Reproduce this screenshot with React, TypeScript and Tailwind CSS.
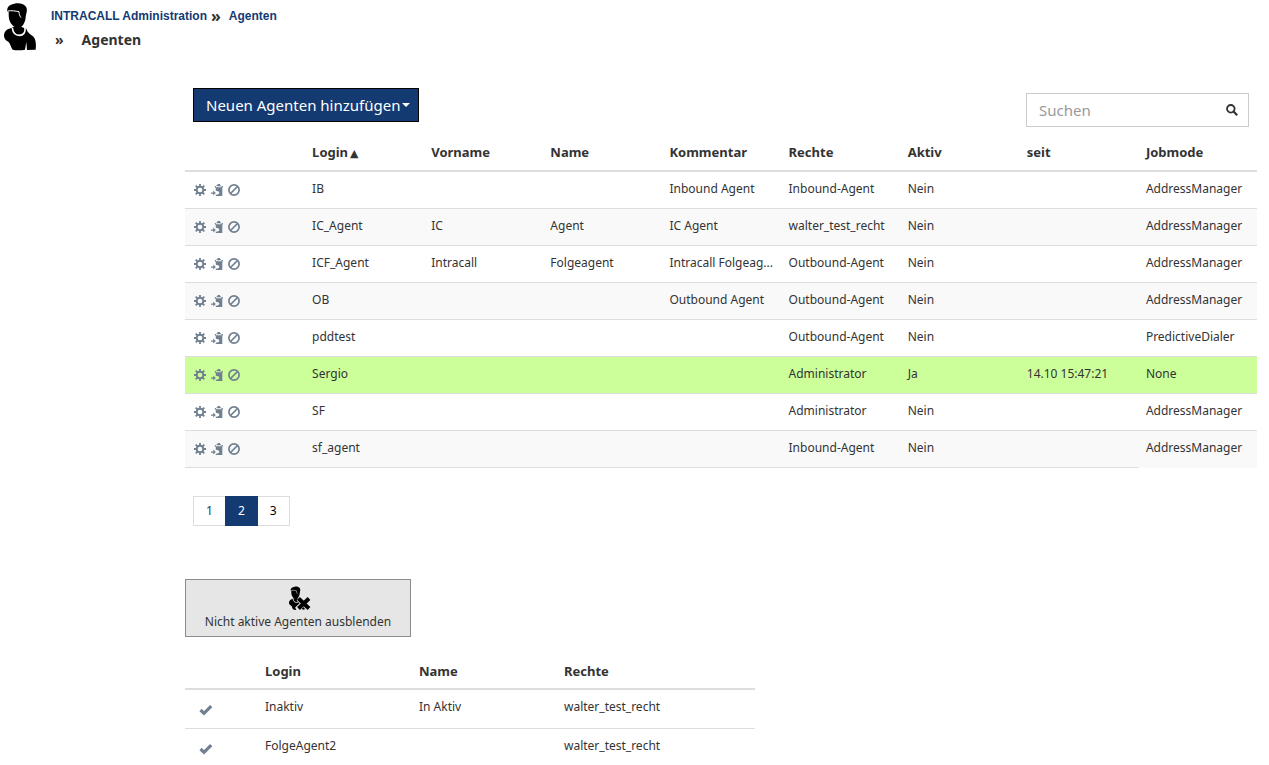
import { ReactNode } from "react";

interface Agent {
  login: string;
  vorname?: string;
  name?: string;
  kommentar?: string;
  rechte: string;
  aktiv: string;
  seit?: string;
  jobmode: string;
}

const AGENTS: Agent[] = [
  { login: "IB", kommentar: "Inbound Agent", rechte: "Inbound-Agent", aktiv: "Nein", jobmode: "AddressManager" },
  { login: "IC_Agent", vorname: "IC", name: "Agent", kommentar: "IC Agent", rechte: "walter_test_recht", aktiv: "Nein", jobmode: "AddressManager" },
  { login: "ICF_Agent", vorname: "Intracall", name: "Folgeagent", kommentar: "Intracall Folgeag...", rechte: "Outbound-Agent", aktiv: "Nein", jobmode: "AddressManager" },
  { login: "OB", kommentar: "Outbound Agent", rechte: "Outbound-Agent", aktiv: "Nein", jobmode: "AddressManager" },
  { login: "pddtest", rechte: "Outbound-Agent", aktiv: "Nein", jobmode: "PredictiveDialer" },
  { login: "Sergio", rechte: "Administrator", aktiv: "Ja", seit: "14.10 15:47:21", jobmode: "None" },
  { login: "SF", rechte: "Administrator", aktiv: "Nein", jobmode: "AddressManager" },
  { login: "sf_agent", rechte: "Inbound-Agent", aktiv: "Nein", jobmode: "AddressManager" },
];

const INACTIVE_AGENTS = [
  { login: "Inaktiv", name: "In Aktiv", rechte: "walter_test_recht" },
  { login: "FolgeAgent2", name: "", rechte: "walter_test_recht" },
];

const COLUMNS = ["Vorname", "Name", "Kommentar", "Rechte", "Aktiv", "seit", "Jobmode"];

function PersonShape() {
  return (
    <>
      <path d="M36 83C24 86 13 91 12 106C11 115 17 122 26 126C31 132 33 143 38 149C48 152 64 151 75 149L79 126L81 150L107 149C109 136 108 117 99 109C93 103 84 101 79 86L62 80H42Z" />
      <path d="M22 34C20 20 30 15 38 13C48 7 70 8 78 20C84 31 78 40 77 52C76 66 69 80 59 84C47 87 34 75 29 63C26 56 26 44 26 35Z" />
      <path d="M24 33C34 31 45 33 57 35C57 42 59 47 63 53" fill="none" stroke="#fff" strokeWidth="3" />
      <path d="M37 84C39 99 47 106 58 106C70 106 77 98 75 83" fill="none" stroke="#fff" strokeWidth="5" />
    </>
  );
}

function PersonIcon() {
  return (
    <svg viewBox="0 0 114 156" className="h-[52px] w-[38px] shrink-0" aria-hidden="true">
      <PersonShape />
    </svg>
  );
}

function PersonRemoveIcon() {
  return (
    <svg viewBox="0 0 28 28" className="size-7" aria-hidden="true">
      <g transform="translate(3 1) scale(.165)">
        <PersonShape />
      </g>
      <path d="M14.500 14.500L24.500 24M24.500 14.500L14.500 24L16 27" fill="none" stroke="#e6e6e6" strokeWidth="5.500" />
      <path d="M14.500 14.500L25 24.500M25 14.500L14.500 24.500" stroke="#000" strokeWidth="4" />
    </svg>
  );
}

function GearIcon() {
  return (
    <svg viewBox="0 0 12 12" className="size-3" fill="none" stroke="currentColor" aria-hidden="true">
      <circle cx="6" cy="6" r="3.300" strokeWidth="1.900" />
      <path
        d="M6 0V2.500M6 9.500V12M0 6H2.500M9.500 6H12M1.700 1.700L3.500 3.500M8.500 8.500L10.300 10.300M1.700 10.300L3.500 8.500M8.500 3.500L10.300 1.700"
        strokeWidth="1.800"
      />
    </svg>
  );
}

function CopyIcon() {
  return (
    <svg viewBox="0 0 12 12" className="size-3" fill="currentColor" aria-hidden="true">
      <path d="M5.500 2.200V1.200H6.500V0H9V1.200H10V2.200Z" />
      <path d="M3.500 2H4.700L5.200 3.200H10.200L10.700 2H12L11.300 4.500V12H4.800V10.600C7 10.800 8.300 10 8.300 8.800C8.300 7.200 6 7.300 4.800 6.800V4.500Z" />
      <path d="M0 8.400H2.200V6.600L4.800 9.100L2.200 11.600V9.800H0Z" />
    </svg>
  );
}

function BanIcon() {
  return (
    <svg viewBox="0 0 12 12" className="size-3" fill="none" stroke="currentColor" strokeWidth="1.700" aria-hidden="true">
      <circle cx="6" cy="6" r="5.100" />
      <path d="M2.500 9.500L9.500 2.500" />
    </svg>
  );
}

function CheckIcon() {
  return (
    <svg viewBox="0 0 14 12" className="h-3 w-[14px]" fill="none" stroke="currentColor" strokeWidth="3.200" aria-hidden="true">
      <path d="M1.500 6L5 9.300L12.200 2.200" />
    </svg>
  );
}

function SearchIcon() {
  return (
    <svg viewBox="0 0 12 12" className="size-3" fill="none" stroke="currentColor" aria-hidden="true">
      <circle cx="4.800" cy="4.800" r="3.800" strokeWidth="1.800" />
      <path d="M7.500 7.500L11.200 11.200" strokeWidth="2.200" />
    </svg>
  );
}

function IconButton({ label, children }: { label: string; children: ReactNode }) {
  return (
    <button type="button" aria-label={label} className="block cursor-pointer text-[#708090]">
      {children}
    </button>
  );
}

function rowColor(agent: Agent, index: number) {
  if (agent.aktiv === "Ja") return "bg-[#ccff99]";
  return index % 2 === 1 ? "bg-[#f9f9f9]" : "bg-white";
}

function Header() {
  return (
    <header className="flex">
      <PersonIcon />
      <div className="flex flex-col gap-1 pt-1.5 pl-[13px]">
        <nav className="flex items-center gap-1 font-['Liberation_Sans',sans-serif] text-xs leading-5 font-bold text-[#143a72]">
          <a href="#admin">INTRACALL Administration</a>
          <span className="font-['Noto_Sans',sans-serif] text-base leading-4 text-[#333]">»</span>
          <a href="#agenten" className="pl-1">Agenten</a>
        </nav>
        <h1 className="flex gap-[18px] pl-1 text-sm leading-5 font-bold">
          <span>»</span>
          <span>Agenten</span>
        </h1>
      </div>
    </header>
  );
}

function AgentTable() {
  return (
    <table className="w-full table-fixed text-left">
      <thead>
        <tr className="border-b-2 border-[#ddd] text-[13px] leading-5">
          <td className="p-2"></td>
          <th className="p-2">
            Login<span className="pl-0.5 font-['DejaVu_Sans',sans-serif] text-[11px] leading-4 font-normal">▲</span>
          </th>
          {COLUMNS.map((column) => (
            <th key={column} className="p-2">{column}</th>
          ))}
        </tr>
      </thead>
      <tbody>
        {AGENTS.map((agent, index) => (
          <tr key={agent.login} className={`border-b border-[#ddd] last:border-b-0 ${rowColor(agent, index)}`}>
            <td className="px-2 py-2">
              <div className="flex h-5 items-center gap-[5px] px-px">
                <IconButton label="Bearbeiten"><GearIcon /></IconButton>
                <IconButton label="Kopieren"><CopyIcon /></IconButton>
                <IconButton label="Deaktivieren"><BanIcon /></IconButton>
              </div>
            </td>
            <td className="truncate px-2 pt-[7px] pb-[9px]">{agent.login}</td>
            <td className="truncate px-2 pt-[7px] pb-[9px]">{agent.vorname}</td>
            <td className="truncate px-2 pt-[7px] pb-[9px]">{agent.name}</td>
            <td className="px-2 pt-[7px] pb-[9px] whitespace-nowrap">{agent.kommentar}</td>
            <td className="px-2 pt-[7px] pb-[9px] whitespace-nowrap">{agent.rechte}</td>
            <td className="px-2 pt-[7px] pb-[9px]">{agent.aktiv}</td>
            <td className="px-2 pt-[7px] pb-[9px]">{agent.seit}</td>
            <td className="px-2 pt-[7px] pb-[9px]">{agent.jobmode}</td>
          </tr>
        ))}
      </tbody>
      <tfoot>
        <tr>
          <td colSpan={8} className="border-t border-[#ddd]"></td>
          <td></td>
        </tr>
      </tfoot>
    </table>
  );
}

function Pagination() {
  return (
    <nav aria-label="Seiten" className="flex px-2 text-black">
      <a href="#1" className="border border-[#ddd] px-3 py-1 text-[#143a72]">1</a>
      <a href="#2" aria-current="page" className="-ml-px border border-[#143a72] bg-[#143a72] px-3 py-1 text-white">2</a>
      <a href="#3" className="border border-l-0 border-[#ddd] px-3 py-1">3</a>
    </nav>
  );
}

function InactiveTable() {
  return (
    <table className="w-full max-w-[570px] table-fixed text-left">
      <colgroup>
        <col className="w-[72px]" />
        <col className="w-[154px]" />
        <col className="w-[145px]" />
        <col />
      </colgroup>
      <thead>
        <tr className="border-b-2 border-[#ddd] text-[13px] leading-5">
          <td className="px-2"></td>
          <th className="px-2 pt-2 pb-[7px]">Login</th>
          <th className="px-2 pt-2 pb-[7px]">Name</th>
          <th className="px-2 pt-2 pb-[7px]">Rechte</th>
        </tr>
      </thead>
      <tbody>
        {INACTIVE_AGENTS.map((agent) => (
          <tr key={agent.login} className="h-[39px] border-b border-[#ddd] align-top">
            <td className="px-[14px] pt-[14px]">
              <IconButton label="Aktivieren"><CheckIcon /></IconButton>
            </td>
            <td className="px-2 pt-[7px]">{agent.login}</td>
            <td className="px-2 pt-[7px]">{agent.name}</td>
            <td className="px-2 pt-[7px]">{agent.rechte}</td>
          </tr>
        ))}
      </tbody>
    </table>
  );
}

export default function App() {
  return (
    <div className="min-h-screen bg-white font-['Noto_Sans',sans-serif] text-xs leading-5 text-[#333]">
      <Header />
      <main className="mt-9 mr-3 ml-[185px]">
        {/* Toolbar */}
        <div className="flex items-start justify-between px-2">
          <button
            type="button"
            className="flex h-[34px] items-center gap-0.5 border border-black bg-[#143a72] pr-2 pl-3 text-[15px] text-white"
          >
            Neuen Agenten hinzufügen
            <span className="border-x-4 border-t-4 border-x-transparent border-t-white"></span>
          </button>
          <div className="mt-[5px] flex h-[34px] w-[223px] items-center border border-[#ccc] px-3 pr-2.5">
            <input
              type="text"
              aria-label="Suchen"
              placeholder="Suchen"
              className="min-w-0 flex-1 text-[15px] outline-none placeholder:text-[#999]"
            />
            <button type="button" aria-label="Suche starten">
              <SearchIcon />
            </button>
          </div>
        </div>

        <div className="mt-[7px]">
          <AgentTable />
        </div>

        <div className="mt-7">
          <Pagination />
        </div>

        <button
          type="button"
          className="mt-[53px] flex h-[58px] w-[226px] flex-col items-center justify-center border border-[#8c8c8c] bg-[#e6e6e6]"
        >
          <PersonRemoveIcon />
          <span>Nicht aktive Agenten ausblenden</span>
        </button>

        <div className="mt-4">
          <InactiveTable />
        </div>
      </main>
    </div>
  );
}
